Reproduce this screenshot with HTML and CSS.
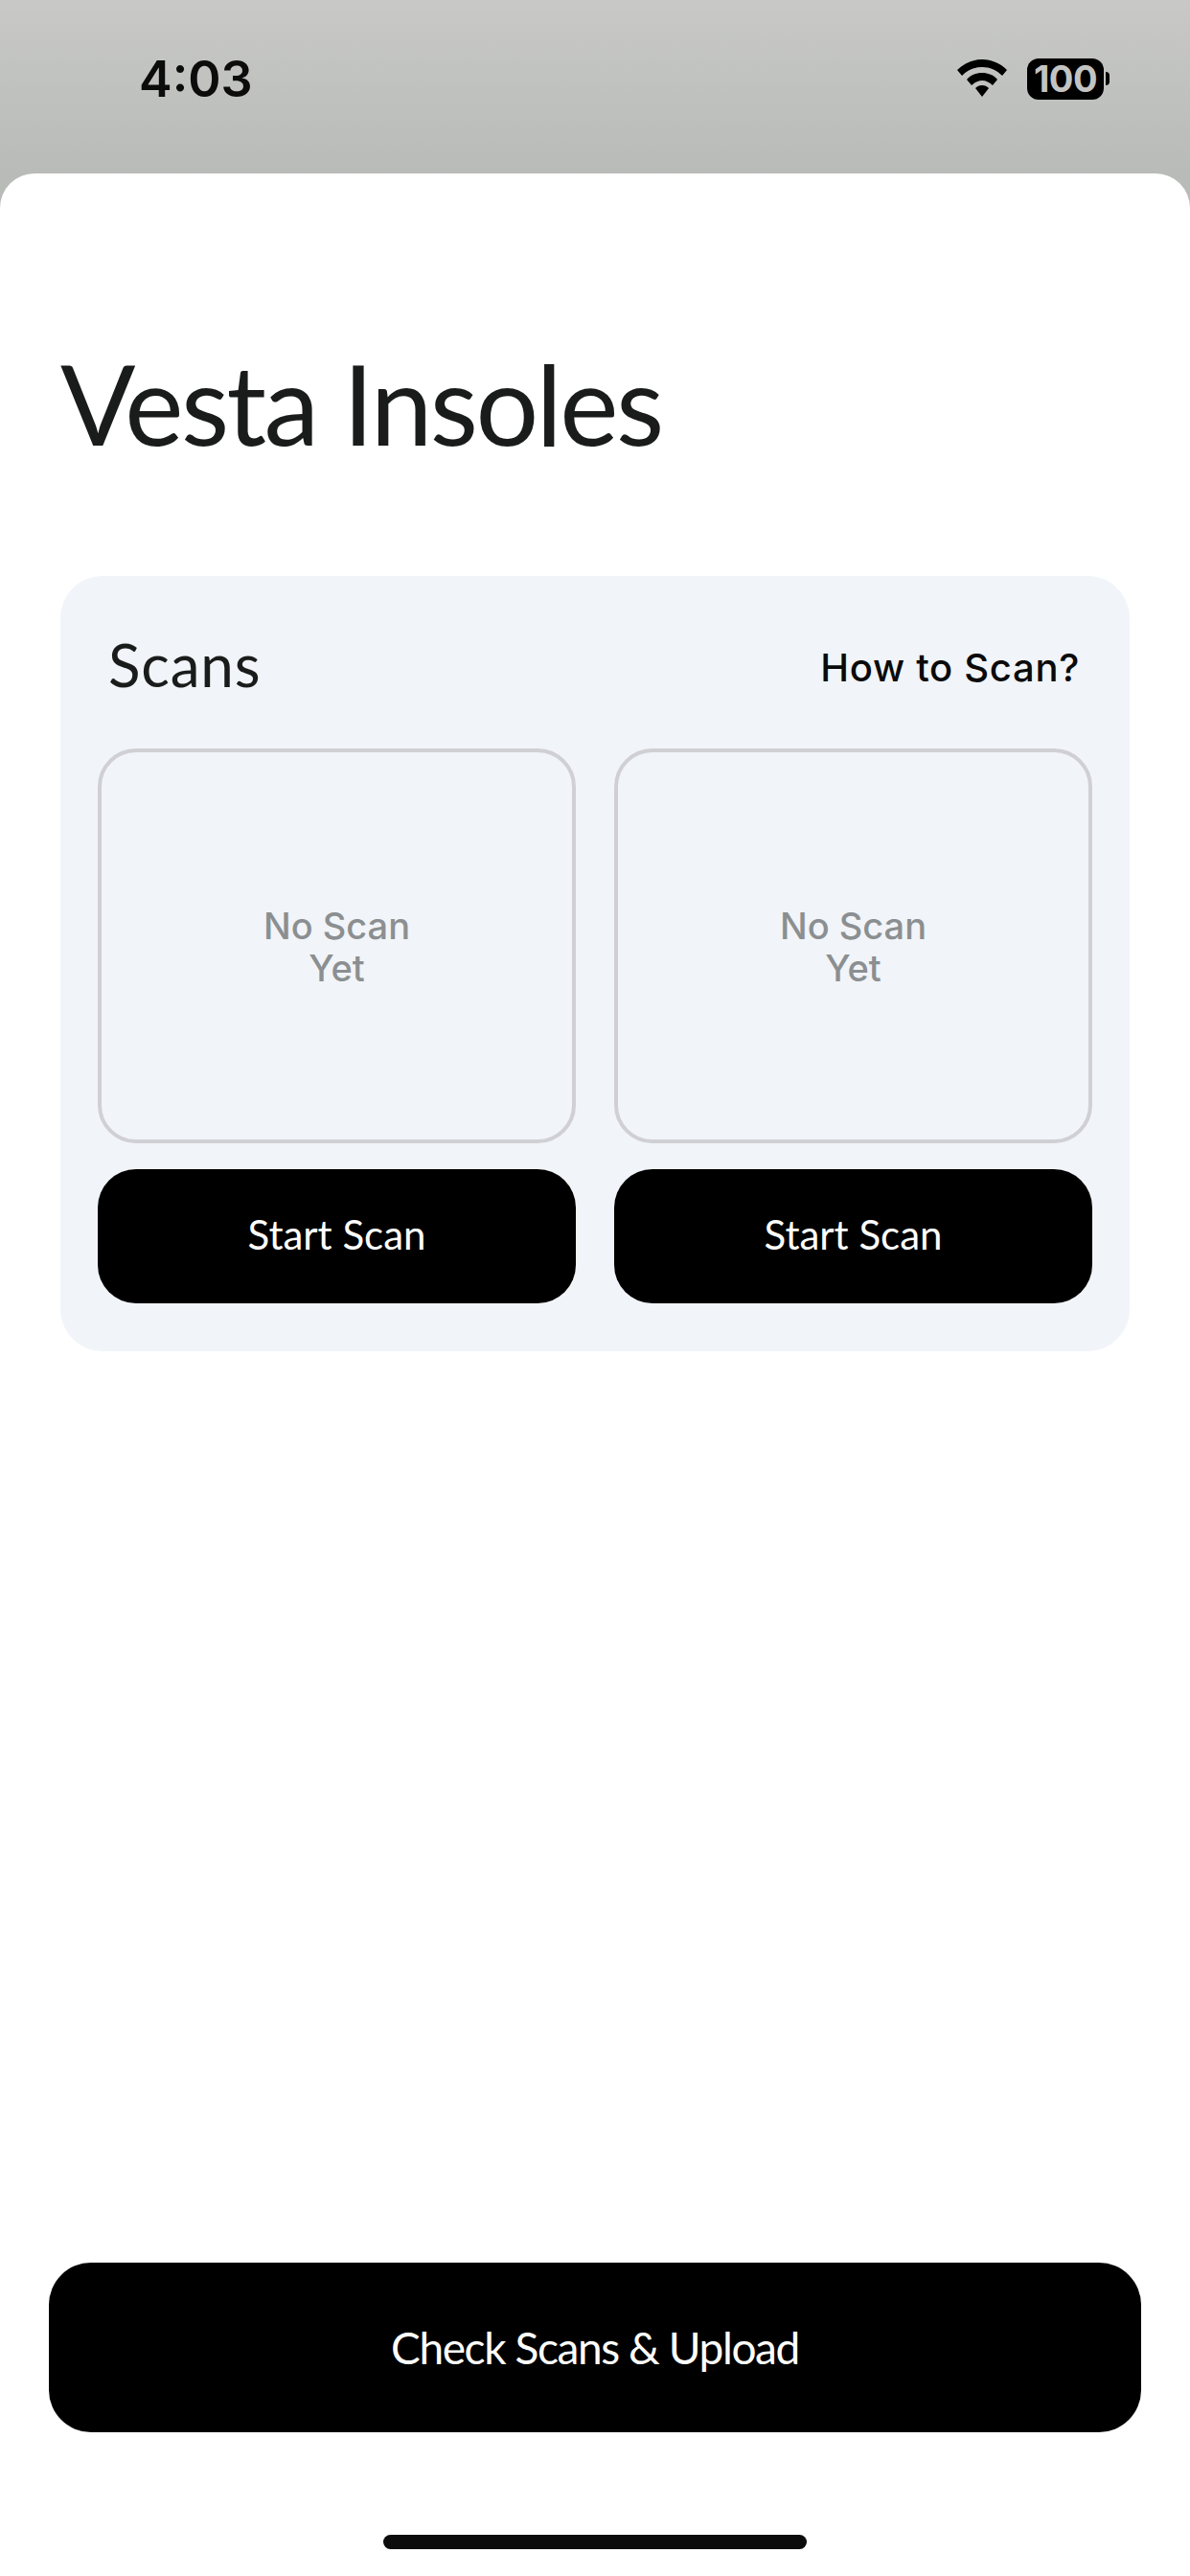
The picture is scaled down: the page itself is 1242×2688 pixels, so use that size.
FILE: index.html
```html
<!DOCTYPE html>
<html lang="en">
<head>
  <meta charset="UTF-8">
  <meta name="viewport" content="width=device-width, initial-scale=1.0">
  <title>Vesta Insoles</title>
  <link rel="stylesheet" href="styles.css">
</head>
<body>
  <div class="status-bar">
    <span class="time">4:03</span>
    <div class="status-icons">
      <svg class="wifi" viewBox="0 0 54 40" width="54" height="40">
        <path d="M27 0C17 0 8 4 1 11l5 6C12 11 19 8 27 8s15 3 21 9l5-6C46 4 37 0 27 0z"/>
        <path d="M27 14c-6 0-12 2-16 7l5 6c3-3 7-5 11-5s8 2 11 5l5-6c-4-5-10-7-16-7z"/>
        <path d="M27 27c-3 0-5 1-7 3l7 9 7-9c-2-2-4-3-7-3z"/>
      </svg>
      <div class="battery"><span class="battery-level">100</span></div>
      <div class="battery-nub"></div>
    </div>
  </div>

  <div class="sheet">
    <h1 class="page-title">Vesta Insoles</h1>

    <div class="scans-card">
      <div class="card-header">
        <span class="card-title">Scans</span>
        <span class="how-to">How to Scan?</span>
      </div>
      <div class="scan-grid">
        <div class="scan-col">
          <div class="scan-box">No Scan<br>Yet</div>
          <button class="start-btn">Start Scan</button>
        </div>
        <div class="scan-col">
          <div class="scan-box">No Scan<br>Yet</div>
          <button class="start-btn">Start Scan</button>
        </div>
      </div>
    </div>

    <button class="upload-btn">Check Scans &amp; Upload</button>
    <div class="home-bar"></div>
  </div>
</body>
</html>
```

FILE: styles.css
```css
* {
  margin: 0;
  padding: 0;
  box-sizing: border-box;
}
body {
  display: flex;
  flex-direction: column;
  width: 1242px;
  height: 2688px;
  background: linear-gradient(180deg, #c8c9c7, #b9bbb8 181px);
  font-family: 'Lato', Arial, sans-serif;
  overflow: hidden;
}
button {
  border: none;
  background: #000;
  color: #fff;
  font-family: 'Lato', Arial, sans-serif;
}
.status-bar {
  display: flex;
  justify-content: space-between;
  align-items: center;
  height: 181px;
  padding: 0 84px 17px 145px;
}
.time {
  font-family: 'Inter', sans-serif;
  font-size: 52px;
  font-weight: 600;
  color: #0c0c0c;
}
.status-icons {
  display: flex;
  align-items: center;
}
.wifi {
  margin-right: 20px;
  fill: #000;
}
.battery {
  display: flex;
  align-items: center;
  justify-content: center;
  width: 80px;
  height: 43px;
  background: #000;
  border-radius: 12px;
}
.battery-level {
  font-family: 'Inter', sans-serif;
  font-size: 38px;
  font-weight: 700;
  letter-spacing: -0.5px;
  color: #c3c4c2;
}
.battery-nub {
  width: 4px;
  height: 14px;
  margin-left: 2px;
  background: #000;
  border-radius: 0 7px 7px 0;
}
.sheet {
  flex: 1;
  display: flex;
  flex-direction: column;
  background: #fff;
  border-radius: 36px 36px 0 0;
  padding: 170px 51px 28px;
}
.page-title {
  font-size: 116px;
  font-weight: 400;
  line-height: 140px;
  letter-spacing: -2.6px;
  margin-left: 12px;
  color: #1a1c1b;
}
.scans-card {
  margin: 110px 12px 0 12px;
  padding: 62px 39px 50px 39px;
  background: #f1f4f8;
  border-radius: 44px;
}
.card-header {
  display: flex;
  justify-content: space-between;
  align-items: center;
  height: 60px;
  padding: 0 13px 0 11px;
}
.card-title {
  font-size: 62px;
  letter-spacing: 0.8px;
  color: #1a1c1b;
}
.how-to {
  padding-top: 6px;
  font-family: 'Inter', sans-serif;
  font-size: 40px;
  font-weight: 500;
  letter-spacing: 0.7px;
  color: #0a0a0a;
}
.scan-grid {
  display: flex;
  gap: 40px;
  margin-top: 58px;
}
.scan-col {
  flex: 1;
  display: flex;
  flex-direction: column;
  gap: 27px;
}
.scan-box {
  display: flex;
  align-items: center;
  justify-content: center;
  height: 412px;
  padding-top: 2px;
  border: 4px solid #d0d0d4;
  border-radius: 40px;
  text-align: center;
  font-family: 'Inter', sans-serif;
  font-size: 38px;
  font-weight: 500;
  line-height: 44px;
  color: #8b8f91;
}
.start-btn {
  height: 140px;
  padding-bottom: 5px;
  border-radius: 40px;
  font-size: 42px;
}
.upload-btn {
  margin-top: auto;
  height: 177px;
  border-radius: 44px;
  font-size: 46px;
  letter-spacing: -1.4px;
}
.home-bar {
  width: 442px;
  height: 15px;
  margin: 107px auto 0;
  background: #0c0c0c;
  border-radius: 8px;
}
```
